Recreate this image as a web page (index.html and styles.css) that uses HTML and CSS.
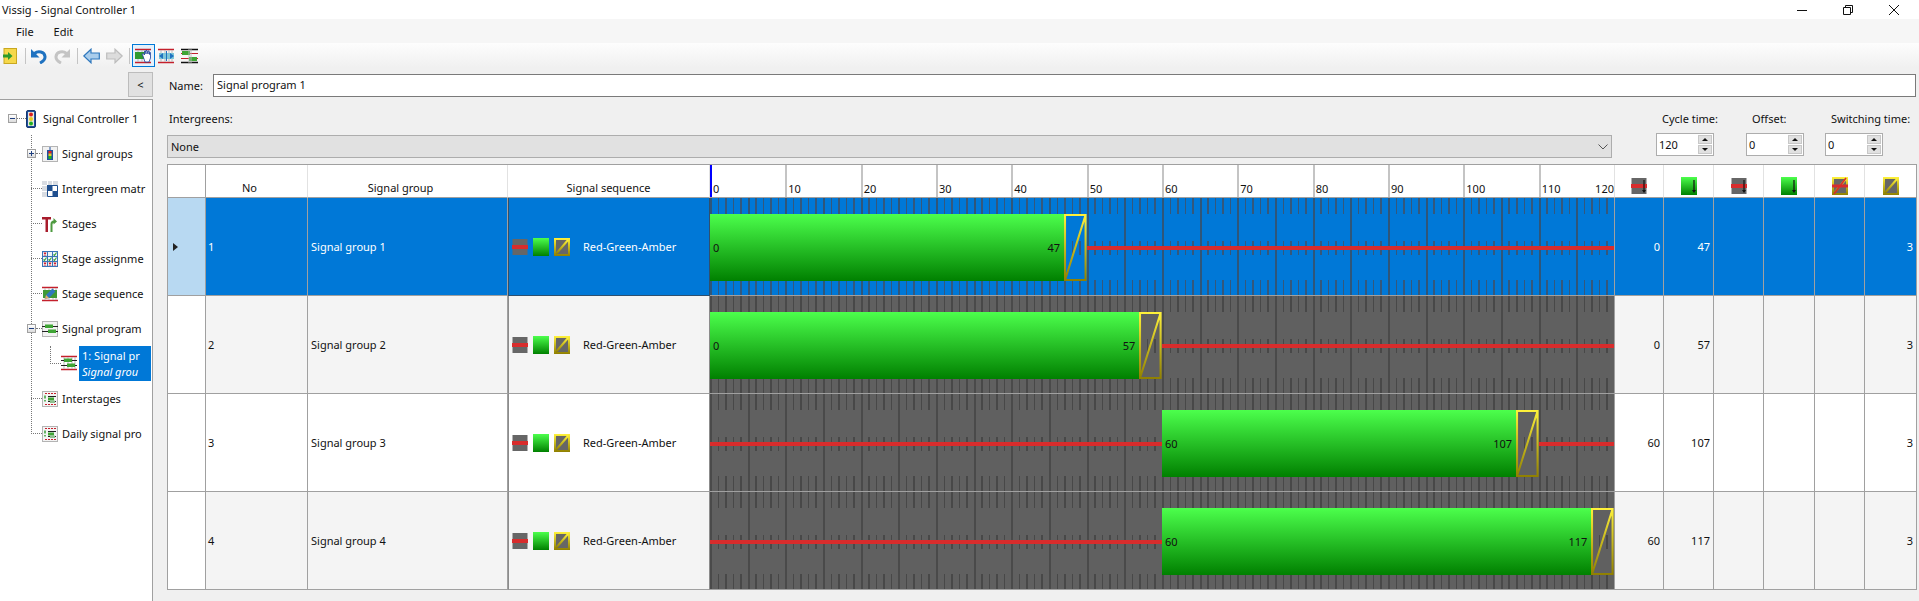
FILE: index.html
```html
<!DOCTYPE html>
<html lang="en">
<head>
    <meta charset="UTF-8">
    <meta name="viewport" content="width=device-width, initial-scale=1.0">
    <title>Vissig - Signal Controller 1</title>
    <link rel="stylesheet" href="styles.css">
</head>
<body>
    <!-- shared icons -->
    <svg class="svg-defs" aria-hidden="true">
        <defs>
            <linearGradient id="g-green" x1="0" y1="0" x2="0" y2="1">
                <stop offset="0" stop-color="#4cff4c"/>
                <stop offset="1" stop-color="#008000"/>
            </linearGradient>
            <linearGradient id="g-amber" x1="0" y1="0" x2="0" y2="1">
                <stop offset="0" stop-color="#fff23a"/>
                <stop offset="1" stop-color="#8f7f00"/>
            </linearGradient>
            <linearGradient id="g-amber-bar" gradientUnits="userSpaceOnUse" x1="0" y1="0" x2="0" y2="67">
                <stop offset="0" stop-color="#fff23a"/>
                <stop offset="1" stop-color="#8f7f00"/>
            </linearGradient>
            <symbol id="sig-red" viewBox="0 0 16 18">
                <rect x="0.5" y="1" width="15" height="16" fill="#666"/>
                <rect y="7" width="16" height="4" fill="#d82c2c"/>
            </symbol>
            <symbol id="sig-green" viewBox="0 0 16 18">
                <rect width="16" height="18" fill="url(#g-green)"/>
            </symbol>
            <symbol id="sig-amber" viewBox="0 0 16 18">
                <rect width="16" height="18" fill="url(#g-amber)"/>
                <rect x="2" y="2" width="12" height="14" fill="#666"/>
                <path d="M2 16 14 2" stroke="url(#g-amber)" stroke-width="2" fill="none"/>
            </symbol>
            <symbol id="arrow-down" viewBox="0 0 16 18">
                <path d="M13 3v11" stroke="#111" stroke-width="1.2"/>
                <path d="M11 13h4l-2 3z" fill="#111"/>
            </symbol>
            <symbol id="bars" viewBox="0 0 16 16">
                <path d="M0 1.5h16M0 14.5h16" stroke="#c4202c" stroke-width="1.4"/>
                <path d="M3 2v12M7 2v12M11 2v12M14 2v12" stroke="#b9b9b9"/>
            </symbol>
            <symbol id="prog" viewBox="0 0 16 16">
                <path d="M0 5.5h16M0 10.5h16" stroke="#222"/>
                <rect x="3" y="3.5" width="8" height="3.5" fill="#3fa535"/>
                <rect x="6" y="8.5" width="8" height="3.5" fill="#3fa535"/>
            </symbol>
            <symbol id="list" viewBox="0 0 16 16">
                <rect x="0.500" y="0.500" width="15" height="15" fill="#f4f4f4" stroke="#b4b4b4"/>
                <path d="M3 2.500h11" stroke="#c4202c" stroke-dasharray="2 1"/>
                <path d="M3 13.500h11" stroke="#c4202c" stroke-dasharray="2 1"/>
                <path d="M3 4.500v3M3 9v1.500" stroke="#2a9a2a" stroke-width="1.400"/>
                <path d="M6 5.500h8M6 10.500h8" stroke="#222"/>
                <rect x="6" y="6.500" width="6" height="3" fill="#3fa535"/>
                <rect x="8" y="9.500" width="5" height="2.500" fill="#8fbf8f"/>
            </symbol>
            <symbol id="undo" viewBox="0 0 17 16">
                <path d="M4.500 5.500C8 2.500 14.500 3.500 15 8.500c.3 3-2 5-5 6.500" fill="none" stroke="currentColor" stroke-width="3"/>
                <path d="M1 1v8.500h8.500z" fill="currentColor"/>
            </symbol>
        </defs>
    </svg>

    <header class="titlebar">
        <span>Vissig - Signal Controller 1</span>
        <div class="window-buttons">
            <svg width="10" height="10" viewBox="0 0 10 10"><path d="M0 5.500h10" stroke="#111"/></svg>
            <svg width="10" height="10" viewBox="0 0 10 10"><path d="M.5 2.500h7v7h-7zM2.500 2.500v-2h7v7h-2" fill="none" stroke="#111"/></svg>
            <svg width="10" height="10" viewBox="0 0 10 10"><path d="M0 0l10 10M10 0L0 10" stroke="#111"/></svg>
        </div>
    </header>

    <nav class="menubar">
        <span>File</span>
        <span>Edit</span>
    </nav>

    <div class="toolbar">
        <svg class="tool tool-exit" width="14" height="16" viewBox="0 0 14 16">
            <rect x="1" y="0.500" width="12.500" height="15" fill="#f6d84a" stroke="#c9a820"/>
            <path d="M0 6.500h5V4l4.500 4L5 12V9.500H0z" fill="#2c9a2c"/>
        </svg>
        <span class="tool-sep tool-sep-first"></span>
        <svg class="tool tool-undo" width="17" height="16"><use href="#undo"/></svg>
        <svg class="tool tool-redo" width="17" height="16" viewBox="0 0 17 16"><g transform="matrix(-1 0 0 1 17 0)"><use href="#undo" width="17" height="16"/></g></svg>
        <span class="tool-sep"></span>
        <svg class="tool" width="17" height="16" viewBox="0 0 17 16">
            <path d="M.8 8L8 1.200V5h8.300v6H8v3.800z" fill="#a9cdec" stroke="#2f78bd" stroke-width="1.200"/>
        </svg>
        <svg class="tool tool-gap" width="17" height="16" viewBox="0 0 17 16">
            <path d="M16.200 8L9 1.200V5H.7v6H9v3.800z" fill="#dcdcdc" stroke="#bdbdbd" stroke-width="1.200"/>
        </svg>
        <span class="tool-sep tool-sep-last"></span>
        <span class="tool-active">
            <svg width="17" height="16" viewBox="0 0 17 16">
                <use href="#bars" width="16" height="16"/>
                <rect x="0" y="4" width="10" height="7" fill="#2f9a2f"/>
                <path d="M8 8l-1-2 1-.5 1.500 1.500V3l1 0 .5 3V2.500h1L13 6V3h1l.5 3.500V4.500h1V10l-1.500 4H10z" fill="#fff" stroke="#1a3f9a" stroke-width=".8"/>
            </svg>
        </span>
        <svg class="tool tool-next" width="17" height="16" viewBox="0 0 17 16">
            <use href="#bars" width="16" height="16"/>
            <rect x="1" y="5" width="15" height="6" fill="#7ec6d8"/>
            <path d="M1 8l4-3v6zM16 8l-4-3v6z" fill="#1f72c0"/>
            <path d="M8.500 3v10" stroke="#1f72c0"/>
        </svg>
        <svg class="tool tool-gap" width="17" height="16" viewBox="0 0 17 16">
            <path d="M0 1.500h17M0 14.500h17" stroke="#111" stroke-width="1.500"/>
            <path d="M0 5.500h17M0 10.500h17" stroke="#c4202c" stroke-width="1"/>
            <rect x="1" y="3" width="8" height="4" fill="#3fa535"/>
            <rect x="8" y="9" width="8" height="4" fill="#3fa535"/>
            <rect x="7" y="0" width="4" height="16" fill="#bbb" opacity=".45"/>
        </svg>
    </div>

    <div class="workspace">
        <aside class="sidebar">
            <div class="sidebar-top">
                <button class="collapse-btn">&lt;</button>
            </div>
            <div class="tree">
                <div class="tree-root">
                    <span class="expander minus"></span>
                    <span class="twig"></span>
                    <svg class="tree-icon-root" width="10" height="18" viewBox="0 0 10 18">
                        <rect x="0.500" y="0.500" width="9" height="17" rx="1.500" fill="#1f4f9f" stroke="#16386f"/>
                        <rect x="2" y="2" width="6" height="14" fill="#e8e8d8"/>
                        <circle cx="5" cy="4.500" r="2" fill="#d92020"/>
                        <circle cx="5" cy="9" r="2" fill="#e8c820"/>
                        <circle cx="5" cy="13.500" r="2" fill="#22b022"/>
                    </svg>
                    <span>Signal Controller 1</span>
                </div>
                <ul class="branch">
                    <li class="tree-row">
                        <span class="expander plus"></span>
                        <span class="twig"></span>
                        <svg class="tree-icon" viewBox="0 0 16 16">
                            <rect x="0.500" y="0.500" width="15" height="15" fill="#f2f2f2" stroke="#b4b4b4"/>
                            <path d="M8 1v3" stroke="#1f4f9f"/>
                            <rect x="5" y="4" width="6" height="10" fill="#1f4f9f"/>
                            <rect x="6.500" y="5" width="3" height="2.500" fill="#e02020"/>
                            <rect x="6.500" y="7.500" width="3" height="2.500" fill="#e8c820"/>
                            <rect x="6.500" y="10" width="3" height="3" fill="#22b022"/>
                        </svg>
                        <span>Signal groups</span>
                    </li>
                    <li class="tree-row">
                        <span class="twig"></span>
                        <svg class="tree-icon" viewBox="0 0 16 16">
                            <rect width="16" height="16" fill="#d8dce2"/>
                            <path d="M0 4.500h16M0 10.500h5M5.500 0v16M10.500 0v4" stroke="#fff"/>
                            <rect x="5" y="4" width="11" height="12" fill="#fff"/>
                            <rect x="5" y="4" width="5.500" height="6" fill="#1f4f8f"/>
                            <rect x="10.500" y="10" width="5.500" height="6" fill="#1f4f8f"/>
                            <path d="M5.500 4.500h10v11h-10z" fill="none" stroke="#1f4f8f"/>
                        </svg>
                        <span>Intergreen matr</span>
                    </li>
                    <li class="tree-row">
                        <span class="twig"></span>
                        <svg class="tree-icon" viewBox="0 0 16 16">
                            <path d="M0 1h9v2.500H6V16H3.500V3.500H0z" fill="#a81c2c"/>
                            <path d="M8.500 16V8c0-2 1.500-3.500 3-3.500V2l3.500 3.500-3.500 3V7c-.5 0-1 .5-1 1.500V16z" fill="#4d9a3f"/>
                        </svg>
                        <span>Stages</span>
                    </li>
                    <li class="tree-row">
                        <span class="twig"></span>
                        <svg class="tree-icon" viewBox="0 0 16 16">
                            <rect x="0.500" y="0.500" width="15" height="15" fill="#eef3fa" stroke="#3a74b8"/>
                            <path d="M5.500 0v16M10.500 0v16M0 5.500h16M0 10.500h16" stroke="#3a74b8"/>
                            <path d="M2 1.500l2 3M4 1.500l-2 3M2 11.500l2 3M4 11.500l-2 3M7 11.500l2 3M9 11.500l-2 3M12 11.500l2 3M14 11.500l-2 3" stroke="#d02030" stroke-width="1.200"/>
                            <path d="M11.500 3.500l1 1 2-3M6.500 8.500l1 1 2-3M1.500 8.500l1 1 2-3M11.500 8.500l1 1 2-3" stroke="#3aa53a" fill="none" stroke-width="1.100"/>
                        </svg>
                        <span>Stage assignme</span>
                    </li>
                    <li class="tree-row">
                        <span class="twig"></span>
                        <svg class="tree-icon" viewBox="0 0 16 16">
                            <use href="#bars" width="16" height="16"/>
                            <rect x="1" y="4" width="14" height="8" fill="#3f9a35"/>
                            <path d="M3 13l1-4 6.500-6.500 3 3L7 12z" fill="#2f78bd"/>
                            <path d="M3 13l1-4 3 3z" fill="#e8b060"/>
                        </svg>
                        <span>Stage sequence</span>
                    </li>
                    <li class="tree-row">
                        <span class="expander minus"></span>
                        <span class="twig"></span>
                        <svg class="tree-icon" viewBox="0 0 16 16">
                            <rect x="0.500" y="0.500" width="15" height="15" fill="#f2f2f2" stroke="#b4b4b4"/>
                            <use href="#prog" width="16" height="16"/>
                        </svg>
                        <span>Signal program</span>
                    </li>
                    <li class="tree-row tree-child">
                        <span class="twig-elbow"></span>
                        <svg class="tree-icon" viewBox="0 0 16 16">
                            <use href="#bars" width="16" height="16"/>
                            <use href="#prog" width="16" height="16"/>
                        </svg>
                        <div class="tree-selected">
                            <span>1: Signal pr</span>
                            <em>Signal grou</em>
                        </div>
                    </li>
                    <li class="tree-row">
                        <span class="twig"></span>
                        <svg class="tree-icon" viewBox="0 0 16 16"><use href="#list" width="16" height="16"/></svg>
                        <span>Interstages</span>
                    </li>
                    <li class="tree-row">
                        <span class="twig"></span>
                        <svg class="tree-icon" viewBox="0 0 16 16"><use href="#list" width="16" height="16"/></svg>
                        <span>Daily signal pro</span>
                    </li>
                </ul>
            </div>
        </aside>

        <main class="content">
            <div class="name-row">
                <label>Name:</label>
                <div class="name-input">Signal program 1</div>
            </div>

            <div class="params">
                <div class="intergreens">
                    <label>Intergreens:</label>
                    <div class="combo">
                        <span>None</span>
                        <svg width="10" height="6" viewBox="0 0 10 6"><path d="M.5.500 5 5 9.500.500" fill="none" stroke="#555"/></svg>
                    </div>
                </div>
                <div class="param param-cycle">
                    <label>Cycle time:</label>
                    <div class="spin"><span>120</span><div class="spin-btns"><i class="up"></i><i class="down"></i></div></div>
                </div>
                <div class="param param-offset">
                    <label>Offset:</label>
                    <div class="spin"><span>0</span><div class="spin-btns"><i class="up"></i><i class="down"></i></div></div>
                </div>
                <div class="param param-switch">
                    <label>Switching time:</label>
                    <div class="spin"><span>0</span><div class="spin-btns"><i class="up"></i><i class="down"></i></div></div>
                </div>
            </div>

            <table class="grid">
                <colgroup>
                    <col class="c-head"><col class="c-no"><col class="c-group"><col class="c-seq"><col class="c-time">
                    <col class="c-49"><col class="c-50"><col class="c-50"><col class="c-51"><col class="c-50"><col class="c-51">
                </colgroup>
                <thead>
                    <tr>
                        <th></th>
                        <th class="th-shift">No</th>
                        <th class="th-shift">Signal group</th>
                        <th>Signal sequence</th>
                        <th class="scale-cell">
                            <div class="scale">
                                <span>0</span><span>10</span><span>20</span><span>30</span><span>40</span><span>50</span>
                                <span>60</span><span>70</span><span>80</span><span>90</span><span>100</span>
                                <span class="scale-last"><b>110</b><b>120</b></span>
                            </div>
                        </th>
                        <th><svg class="sig" viewBox="0 0 16 18"><use href="#sig-red" width="16" height="18"/><use href="#arrow-down" width="16" height="18"/></svg></th>
                        <th><svg class="sig" viewBox="0 0 16 18"><use href="#sig-green" width="16" height="18"/><use href="#arrow-down" width="16" height="18"/></svg></th>
                        <th><svg class="sig" viewBox="0 0 16 18"><use href="#sig-red" width="16" height="18"/><use href="#arrow-down" width="16" height="18"/></svg></th>
                        <th><svg class="sig" viewBox="0 0 16 18"><use href="#sig-green" width="16" height="18"/><use href="#arrow-down" width="16" height="18"/></svg></th>
                        <th><svg class="sig" viewBox="0 0 16 18"><use href="#sig-amber" width="16" height="18"/><path d="M0 9h16" stroke="#d82c2c" stroke-width="3"/><path d="M2 17 14 1" stroke="#d82c2c" stroke-width="1.500"/></svg></th>
                        <th><svg class="sig" viewBox="0 0 16 18"><use href="#sig-amber" width="16" height="18"/></svg></th>
                    </tr>
                </thead>
                <tbody>
                    <tr class="selected">
                        <td class="row-head"><span class="row-arrow"></span></td>
                        <td class="cell-no">1</td>
                        <td>Signal group 1</td>
                        <td class="seq">
                            <div class="seq-wrap">
                                <svg class="sig"><use href="#sig-red"/></svg>
                                <svg class="sig"><use href="#sig-green"/></svg>
                                <svg class="sig"><use href="#sig-amber"/></svg>
                                <span class="seq-name">Red-Green-Amber</span>
                            </div>
                        </td>
                        <td class="time-cell">
                            <div class="timeline">
                                <div class="bar-green" style="grid-column: 1 / 48"><span>0</span><span>47</span></div>
                                <svg class="bar-amber" style="grid-column: 48 / 51" viewBox="0 0 22 67" preserveAspectRatio="none">
                                    <path d="M1 1h20v65H1zM1 66 21 1" fill="none" stroke="url(#g-amber-bar)" stroke-width="2"/>
                                </svg>
                                <div class="bar-red" style="grid-column: 51 / 121"></div>
                            </div>
                        </td>
                        <td class="num">0</td>
                        <td class="num">47</td>
                        <td></td><td></td><td></td>
                        <td class="num">3</td>
                    </tr>
                    <tr class="alt">
                        <td class="row-head"></td>
                        <td class="cell-no">2</td>
                        <td>Signal group 2</td>
                        <td class="seq">
                            <div class="seq-wrap">
                                <svg class="sig"><use href="#sig-red"/></svg>
                                <svg class="sig"><use href="#sig-green"/></svg>
                                <svg class="sig"><use href="#sig-amber"/></svg>
                                <span class="seq-name">Red-Green-Amber</span>
                            </div>
                        </td>
                        <td class="time-cell">
                            <div class="timeline">
                                <div class="bar-green" style="grid-column: 1 / 58"><span>0</span><span>57</span></div>
                                <svg class="bar-amber" style="grid-column: 58 / 61" viewBox="0 0 22 67" preserveAspectRatio="none">
                                    <path d="M1 1h20v65H1zM1 66 21 1" fill="none" stroke="url(#g-amber-bar)" stroke-width="2"/>
                                </svg>
                                <div class="bar-red" style="grid-column: 61 / 121"></div>
                            </div>
                        </td>
                        <td class="num">0</td>
                        <td class="num">57</td>
                        <td></td><td></td><td></td>
                        <td class="num">3</td>
                    </tr>
                    <tr>
                        <td class="row-head"></td>
                        <td class="cell-no">3</td>
                        <td>Signal group 3</td>
                        <td class="seq">
                            <div class="seq-wrap">
                                <svg class="sig"><use href="#sig-red"/></svg>
                                <svg class="sig"><use href="#sig-green"/></svg>
                                <svg class="sig"><use href="#sig-amber"/></svg>
                                <span class="seq-name">Red-Green-Amber</span>
                            </div>
                        </td>
                        <td class="time-cell">
                            <div class="timeline">
                                <div class="bar-red" style="grid-column: 1 / 61"></div>
                                <div class="bar-green" style="grid-column: 61 / 108"><span>60</span><span>107</span></div>
                                <svg class="bar-amber" style="grid-column: 108 / 111" viewBox="0 0 22 67" preserveAspectRatio="none">
                                    <path d="M1 1h20v65H1zM1 66 21 1" fill="none" stroke="url(#g-amber-bar)" stroke-width="2"/>
                                </svg>
                                <div class="bar-red" style="grid-column: 111 / 121"></div>
                            </div>
                        </td>
                        <td class="num">60</td>
                        <td class="num">107</td>
                        <td></td><td></td><td></td>
                        <td class="num">3</td>
                    </tr>
                    <tr class="alt">
                        <td class="row-head"></td>
                        <td class="cell-no">4</td>
                        <td>Signal group 4</td>
                        <td class="seq">
                            <div class="seq-wrap">
                                <svg class="sig"><use href="#sig-red"/></svg>
                                <svg class="sig"><use href="#sig-green"/></svg>
                                <svg class="sig"><use href="#sig-amber"/></svg>
                                <span class="seq-name">Red-Green-Amber</span>
                            </div>
                        </td>
                        <td class="time-cell">
                            <div class="timeline">
                                <div class="bar-red" style="grid-column: 1 / 61"></div>
                                <div class="bar-green" style="grid-column: 61 / 118"><span>60</span><span>117</span></div>
                                <svg class="bar-amber" style="grid-column: 118 / 121" viewBox="0 0 22 67" preserveAspectRatio="none">
                                    <path d="M1 1h20v65H1zM1 66 21 1" fill="none" stroke="url(#g-amber-bar)" stroke-width="2"/>
                                </svg>
                            </div>
                        </td>
                        <td class="num">60</td>
                        <td class="num">117</td>
                        <td></td><td></td><td></td>
                        <td class="num">3</td>
                    </tr>
                </tbody>
            </table>
        </main>
    </div>
</body>
</html>
```

FILE: styles.css
```css
* {
    box-sizing: border-box;
}

html, body {
    margin: 0;
    height: 100%;
    overflow: hidden;
}

body {
    font-family: "Noto Sans", "Open Sans", sans-serif;
    font-size: 11px;
    color: #111;
    background-color: #f0f0f0;
    display: flex;
    flex-direction: column;
}

.svg-defs {
    position: absolute;
    width: 0;
    height: 0;
}

/* title, menu and toolbar */
.titlebar {
    height: 19px;
    background-color: #fff;
    padding-left: 2px;
    display: flex;
    align-items: center;
    justify-content: space-between;
}

.window-buttons {
    display: flex;
    gap: 36px;
    padding-right: 20px;
}

.menubar {
    height: 24px;
    background-color: #f6f6f6;
    padding-left: 16px;
    display: flex;
    align-items: center;
    gap: 20px;
}

.toolbar {
    height: 25px;
    background: linear-gradient(#fdfdfd, #f0f0f0);
    padding-left: 3px;
    display: flex;
    align-items: center;
}

.tool {
    flex: none;
}

.tool-undo {
    color: #1f72c0;
}

.tool-redo {
    color: #c4c4c4;
    margin-left: 7px;
}

.tool-gap {
    margin-left: 6px;
}

.tool-sep {
    width: 1px;
    height: 16px;
    background-color: #c4c4c4;
    margin: 0 5px 0 6px;
}

.tool-sep-first {
    margin: 0 4px 0 8px;
}

.tool-sep-last {
    margin: 0 2px 0 6px;
}

.tool-active {
    width: 23px;
    height: 23px;
    border: 1px solid #0078d7;
    background-color: #e5f1fb;
    display: flex;
    align-items: center;
    justify-content: center;
}

.tool-next {
    margin-left: 3px;
}

/* left tree */
.workspace {
    flex: 1;
    display: flex;
    min-height: 0;
}

.sidebar {
    width: 153px;
    display: flex;
    flex-direction: column;
}

.sidebar-top {
    height: 31px;
    padding: 4px 0 0 128px;
}

.collapse-btn {
    width: 25px;
    height: 25px;
    padding: 0;
    border: 1px solid #bcbcbc;
    background-color: #e1e1e1;
    font: inherit;
    color: #111;
}

.tree {
    flex: 1;
    background-color: #fff;
    border-top: 1px solid #a0a0a0;
    border-right: 1px solid #a0a0a0;
    padding-top: 1px;
}

.tree-root {
    height: 35px;
    padding-left: 8px;
    display: flex;
    align-items: center;
}

.branch {
    list-style: none;
    margin: 0;
    padding: 0;
    position: relative;
}

.branch::before {
    content: "";
    position: absolute;
    left: 31px;
    top: -1px;
    bottom: 17px;
    border-left: 1px dotted #777;
}

.tree-row {
    position: relative;
    height: 35px;
    padding-left: 31px;
    display: flex;
    align-items: center;
}

.twig {
    width: 11px;
    border-top: 1px dotted #777;
}

.expander + .twig {
    width: 6px;
}

.tree-root .expander + .twig {
    width: 9px;
}

.expander {
    position: relative;
    width: 9px;
    height: 9px;
    margin-left: -4px;
    border: 1px solid #a0a0a0;
    background: linear-gradient(#fff, #dcdcdc);
}

.tree-root .expander {
    margin-left: 0;
}

.expander::before {
    content: "";
    position: absolute;
    left: 1px;
    top: 3px;
    width: 5px;
    height: 1px;
    background-color: #1f3f7f;
}

.plus::after {
    content: "";
    position: absolute;
    left: 3px;
    top: 1px;
    width: 1px;
    height: 5px;
    background-color: #1f3f7f;
}

.tree-icon {
    width: 16px;
    height: 16px;
    margin-right: 4px;
    flex: none;
}

.tree-icon-root {
    margin-right: 7px;
}

.tree-child {
    padding-left: 50px;
    align-items: flex-start;
}

.twig-elbow {
    width: 11px;
    height: 18px;
    border-left: 1px dotted #777;
    border-bottom: 1px dotted #777;
}

.tree-child .tree-icon {
    margin: 9px 2px 0 0;
}

.tree-selected {
    width: 72px;
    height: 35px;
    padding-left: 3px;
    background-color: #0078d7;
    color: #fff;
    display: flex;
    flex-direction: column;
    justify-content: center;
    line-height: 16px;
}

/* main form */
.content {
    flex: 1;
    min-width: 0;
    padding: 6px 3px 0 14px;
}

.name-row {
    display: flex;
    align-items: center;
    padding-left: 2px;
    height: 23px;
}

.name-row label {
    width: 44px;
}

.name-input {
    flex: 1;
    height: 23px;
    background-color: #fff;
    border: 1px solid #7a7a7a;
    padding-left: 3px;
    line-height: 19px;
}

.params {
    display: flex;
    margin-top: 14px;
    height: 46px;
}

.intergreens {
    width: 1445px;
}

.intergreens label {
    display: block;
    height: 16px;
    padding-left: 2px;
    line-height: 16px;
}

.combo {
    height: 23px;
    margin-top: 8px;
    background-color: #e1e1e1;
    border: 1px solid #adadad;
    padding: 0 3px 0 3px;
    display: flex;
    align-items: center;
    justify-content: space-between;
}

.param {
    width: 58px;
}

.param label {
    display: block;
    height: 16px;
    padding-left: 6px;
    white-space: nowrap;
    line-height: 16px;
}

.param-cycle {
    margin-left: 44px;
}

.param-offset {
    margin-left: 32px;
}

.param-switch {
    margin-left: 21px;
}

.spin {
    height: 23px;
    margin-top: 6px;
    background-color: #fff;
    border: 1px solid #adadad;
    padding-left: 2px;
    display: flex;
    align-items: center;
    justify-content: space-between;
}

.spin-btns {
    width: 14px;
    height: 19px;
    margin-right: 1px;
    display: flex;
    flex-direction: column;
    gap: 1px;
}

.spin-btns i {
    flex: 1;
    position: relative;
    background-color: #e1e1e1;
    border: 1px solid #c8c8c8;
}

.spin-btns i::after {
    content: "";
    position: absolute;
    left: 3px;
    top: 2px;
    border: 3px solid transparent;
    border-top: 0;
    border-bottom: 3px solid #111;
}

.spin-btns .down::after {
    border-bottom: 0;
    border-top: 3px solid #111;
}

/* signal table */
.grid {
    width: 1749px;
    margin-top: 7px;
    table-layout: fixed;
    border-collapse: separate;
    border-spacing: 0;
    border-top: 1px solid #a0a0a0;
    border-left: 1px solid #a0a0a0;
    border-right: 1px solid #a0a0a0;
}

.c-head { width: 38px; }
.c-no { width: 102px; }
.c-group { width: 200px; }
.c-seq { width: 202px; }
.c-time { width: 905px; }
.c-49 { width: 49px; }
.c-50 { width: 50px; }
.c-51 { width: 51px; }

.grid th {
    height: 33px;
    padding: 0 0 2px;
    background-color: #fff;
    font-weight: normal;
    border-right: 1px solid #e2e2e2;
    border-bottom: 1px solid #a0a0a0;
    vertical-align: bottom;
}

.grid th:first-child {
    border-right-color: #a0a0a0;
}

.grid th:last-child {
    border-right: 0;
}

.grid th.th-shift {
    padding-right: 14px;
}

.grid th svg {
    display: block;
    margin: 0 auto;
}

.grid td {
    height: 98px;
    padding: 0 0 0 3px;
    background-color: #fff;
    border-right: 1px solid #a0a0a0;
    border-bottom: 1px solid #a0a0a0;
    vertical-align: middle;
}

.grid td:last-child {
    border-right: 0;
}

.grid td.cell-no {
    padding-left: 2px;
}

.grid tr.alt td {
    background-color: #f4f4f4;
}

.grid tr.alt td.row-head {
    background-color: #fff;
}

.grid td.num {
    text-align: right;
    padding: 0 3px 0 0;
}

.grid tr.selected td {
    background-color: #0078d7;
    color: #fff;
}

.grid tr.selected td.row-head {
    background-color: #b8d9f2;
}

.row-arrow {
    display: block;
    margin-left: 2px;
    width: 0;
    border: 4px solid transparent;
    border-left: 5px solid #222;
    border-right: 0;
}

.grid td.seq {
    padding-left: 3px;
    border-left: 1px solid #8c8c8c;
    border-right-color: #8c8c8c;
}

.grid tr.selected td.seq {
    border-color: #2f506e;
}

.seq-wrap {
    display: flex;
    align-items: center;
    gap: 5px;
}

.sig {
    width: 16px;
    height: 18px;
    flex: none;
}

.seq-name {
    margin-left: 8px;
}

/* timeline */
.grid th.scale-cell {
    padding: 0;
    box-shadow: inset 2px 0 0 #0000ff;
}

.scale {
    height: 32px;
    display: grid;
    grid-template-columns: repeat(12, 1fr);
    text-align: left;
}

.scale span {
    border-left: 2px solid #c4c4c4;
    padding-left: 1px;
    display: flex;
    align-items: flex-end;
    line-height: 16px;
}

.scale span:first-child {
    border-left-color: transparent;
}

.scale-last {
    justify-content: space-between;
}

.scale-last b {
    font-weight: normal;
}

.grid td.time-cell {
    padding: 0;
    box-shadow: inset 2px 0 0 #0000ff;
}

.timeline {
    --tick: #484848;
    --line: #4a4a4a;
    height: 97px;
    padding-top: 2px;
    display: grid;
    grid-template-columns: repeat(120, 1fr);
    align-items: center;
    background-color: #606060;
    background-image:
        repeating-linear-gradient(90deg, var(--line) 0 2px, transparent 2px 37.667px),
        repeating-linear-gradient(90deg, var(--tick) 0 1.5px, transparent 1.5px 7.533px),
        repeating-linear-gradient(90deg, var(--tick) 0 1.5px, transparent 1.5px 7.533px),
        repeating-linear-gradient(90deg, var(--tick) 0 1.5px, transparent 1.5px 7.533px);
    background-size: 100% 100%, 100% 16px, 100% 14px, 100% 15px;
    background-position: 0 0, 0 0, 0 43px, 0 100%;
    background-repeat: no-repeat;
}

.selected .timeline {
    --tick: #34587c;
    --line: #2f5679;
    background-color: #0078d7;
}

.bar-green {
    height: 67px;
    background: linear-gradient(#4cff4c, #008000);
    padding: 0 4px 0 3px;
    display: flex;
    align-items: center;
    justify-content: space-between;
    color: #111;
    white-space: nowrap;
}

.bar-amber {
    width: 100%;
    height: 67px;
}

.bar-red {
    height: 4px;
    background-color: #d82c2c;
}
```
